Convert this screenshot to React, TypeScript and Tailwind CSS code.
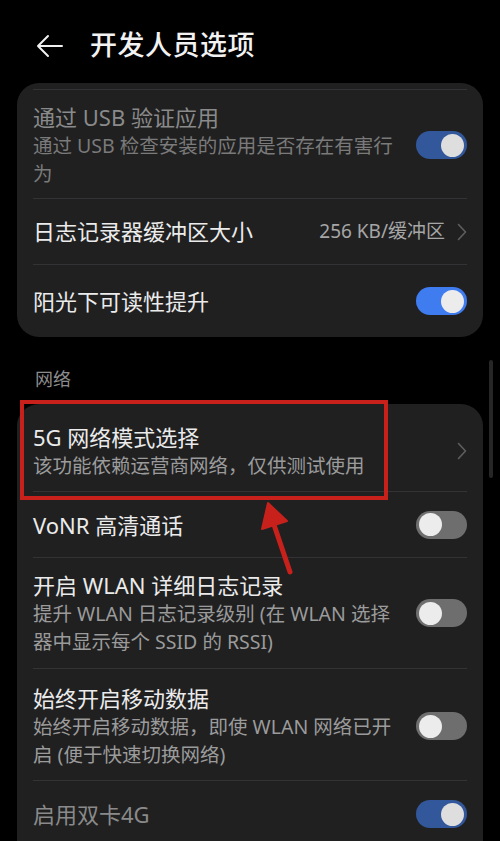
import React from 'react'

type RowProps = {
  title: string
  sub?: string[]
  disabled?: boolean
  right?: React.ReactNode
  className?: string
}

function Toggle({ on, dim = false }: { on: boolean; dim?: boolean }) {
  const track = on ? (dim ? 'bg-[#33579b]' : 'bg-[#3e7cf0]') : 'bg-[#6e6e6e]'
  return (
    <div className={`w-[51px] h-[28px] rounded-full flex items-center px-[3px] shrink-0 ${track} ${on ? 'justify-end' : 'justify-start'}`}>
      <div className={`w-[23px] h-[23px] rounded-full ${dim ? 'bg-[#dedede]' : 'bg-[#ececec]'}`} />
    </div>
  )
}

function Chevron() {
  return (
    <svg width="10" height="18" viewBox="0 0 10 18" className="shrink-0">
      <path d="M1.5 1.5 L8.5 9 L1.5 16.5" fill="none" stroke="#5e5e5e" strokeWidth="1.6" strokeLinecap="round" strokeLinejoin="round" />
    </svg>
  )
}

function Row({ title, sub, disabled = false, right, className = '' }: RowProps) {
  return (
    <div className={`flex items-center gap-4 ${className}`}>
      <div className="flex-1 min-w-0">
        <div className={`text-[22px] leading-[30px] ${disabled ? 'text-[#8a8a8a]' : 'text-[#ebebeb]'}`}>{title}</div>
        {sub && (
          <div className={`text-[19.5px] leading-[28px] ${disabled ? 'text-[#7a7a7a]' : 'text-[#9b9b9b]'}`}>
            {sub.map(line => (
              <div key={line} className="whitespace-nowrap">{line}</div>
            ))}
          </div>
        )}
      </div>
      {right}
    </div>
  )
}

function Divider() {
  return <div className="h-px bg-[#333335]" />
}

export default function App() {
  return (
    <div
      className="relative w-[500px] h-[841px] overflow-hidden bg-black"
      style={{ fontFamily: '"Noto Sans", "Noto Sans CJK SC", sans-serif' }}
    >
      {/* header */}
      <div className="h-[83px] flex items-center pl-[36px] pt-[8px]">
        <svg width="28" height="24" viewBox="0 0 28 24" className="shrink-0">
          <path d="M26 12 H2 M12 2 L2 12 L12 22" fill="none" stroke="#f0f0f0" strokeWidth="2" strokeLinecap="round" strokeLinejoin="round" />
        </svg>
        <h1 className="ml-[26px] text-[27px] font-medium text-[#f2f2f2] tracking-[0.5px]">开发人员选项</h1>
      </div>

      {/* card 1 */}
      <div className="mx-[17px] rounded-[22px] bg-[#202021] px-[16px] pt-[6px] overflow-hidden">
        <Divider />
        <Row
          className="pt-[12px] pb-[10px]"
          title="通过 USB 验证应用"
          sub={['通过 USB 检查安装的应用是否存在有害行', '为']}
          disabled
          right={<Toggle on dim />}
        />
        <Divider />
        <div className="h-[65px] flex items-center gap-3">
          <div className="flex-1 text-[22px] text-[#ebebeb]">日志记录器缓冲区大小</div>
          <span className="text-[19px] text-[#a6a6a6]">256 KB/缓冲区</span>
          <Chevron />
        </div>
        <Divider />
        <Row className="h-[72px]" title="阳光下可读性提升" right={<Toggle on />} />
      </div>

      <div className="mt-[27px] pl-[35px] text-[18px] leading-[30px] text-[#8c8c8c]">网络</div>

      {/* card 2 */}
      <div className="relative mt-[10px] mx-[17px] rounded-t-[22px] bg-[#202021] px-[16px]">
        <Row
          className="pt-[18px] pb-[11px]"
          title="5G 网络模式选择"
          sub={['该功能依赖运营商网络，仅供测试使用']}
          right={<Chevron />}
        />
        <Divider />
        <Row className="h-[65px]" title="VoNR 高清通话" right={<Toggle on={false} />} />
        <Divider />
        <Row
          className="pt-[12px] pb-[12px]"
          title="开启 WLAN 详细日志记录"
          sub={['提升 WLAN 日志记录级别 (在 WLAN 选择', '器中显示每个 SSID 的 RSSI)']}
          right={<Toggle on={false} />}
        />
        <Divider />
        <Row
          className="pt-[14px] pb-[11px]"
          title="始终开启移动数据"
          sub={['始终开启移动数据，即使 WLAN 网络已开', '启 (便于快速切换网络)']}
          right={<Toggle on={false} />}
        />
        <Divider />
        <Row className="h-[66px]" title="启用双卡4G" disabled right={<Toggle on dim />} />

        {/* annotation box */}
        <div className="absolute left-[3px] top-[-4px] w-[368px] h-[100px] border-[4px] border-[#c8211c]" />
      </div>

      {/* scrollbar */}
      <div className="absolute left-[489px] top-[360px] w-[4px] h-[118px] rounded-full bg-[#262626]" />

      {/* annotation arrow */}
      <svg className="absolute left-0 top-0" width="500" height="841" viewBox="0 0 500 841">
        <path d="M290 572 L269 510" stroke="#c8211c" strokeWidth="5" strokeLinecap="round" fill="none" />
        <path d="M268 503 L262 529 L287 521 Z" fill="#c8211c" stroke="#c8211c" strokeWidth="2" strokeLinejoin="round" />
      </svg>
    </div>
  )
}
